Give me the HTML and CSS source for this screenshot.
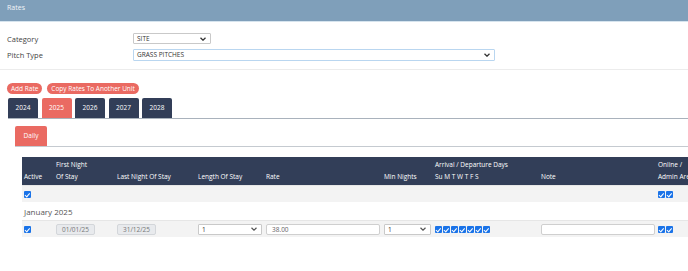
FILE: index.html
```html
<!DOCTYPE html>
<html>
<head>
<meta charset="utf-8">
<link rel="stylesheet" href="styles.css">
</head>
<body>
<div class="titlebar">Rates</div>
<div class="filters">
  <div class="frow">
    <label class="flabel">Category</label>
    <div class="sel sel-cat"><span>SITE</span><svg width="6" height="4" viewBox="0 0 6 4"><path d="M0.5 0.8 L3 3.2 L5.5 0.8" fill="none" stroke="#333" stroke-width="1.3"/></svg></div>
  </div>
  <div class="frow">
    <label class="flabel">Pitch Type</label>
    <div class="sel sel-pitch"><span>GRASS PITCHES</span><svg width="6" height="4" viewBox="0 0 6 4"><path d="M0.5 0.8 L3 3.2 L5.5 0.8" fill="none" stroke="#333" stroke-width="1.3"/></svg></div>
  </div>
</div>
<div class="actions">
  <button class="pill">Add Rate</button>
  <button class="pill">Copy Rates To Another Unit</button>
</div>
<div class="years">
  <div class="ytab">2024</div>
  <div class="ytab active">2025</div>
  <div class="ytab">2026</div>
  <div class="ytab">2027</div>
  <div class="ytab">2028</div>
</div>
<div class="subtabs">
  <div class="stab">Daily</div>
</div>
<div class="tablewrap">
<table class="rates">
  <colgroup>
    <col style="width:32px"><col style="width:61px"><col style="width:81px"><col style="width:68px"><col style="width:118px"><col style="width:51px"><col style="width:106px"><col style="width:117px"><col style="width:60px">
  </colgroup>
  <thead>
    <tr>
      <th><br>Active</th>
      <th>First Night<br>Of Stay</th>
      <th><br>Last Night Of Stay</th>
      <th><br>Length Of Stay</th>
      <th><br>Rate</th>
      <th><br>Min Nights</th>
      <th>Arrival / Departure Days<br>Su M T W T F S</th>
      <th><br>Note</th>
      <th class="nowrap">Online /<br>Admin Area</th>
    </tr>
  </thead>
  <tbody>
    <tr class="grey">
      <td><span class="cb"></span></td>
      <td></td><td></td><td></td><td></td><td></td><td></td><td></td>
      <td><span class="cb"></span><span class="cb"></span></td>
    </tr>
    <tr class="month">
      <td colspan="9">January 2025</td>
    </tr>
    <tr class="grey">
      <td><span class="cb"></span></td>
      <td><div class="date">01/01/25</div></td>
      <td><div class="date">31/12/25</div></td>
      <td><div class="sel sel-len"><span>1</span><svg width="6" height="4" viewBox="0 0 6 4"><path d="M0.5 0.8 L3 3.2 L5.5 0.8" fill="none" stroke="#555" stroke-width="1.2"/></svg></div></td>
      <td><div class="inp inp-rate">38.00</div></td>
      <td><div class="sel sel-min"><span>1</span><svg width="6" height="4" viewBox="0 0 6 4"><path d="M0.5 0.8 L3 3.2 L5.5 0.8" fill="none" stroke="#555" stroke-width="1.2"/></svg></div></td>
      <td><span class="cb"></span><span class="cb"></span><span class="cb"></span><span class="cb"></span><span class="cb"></span><span class="cb"></span><span class="cb"></span></td>
      <td><div class="inp inp-note"></div></td>
      <td><span class="cb"></span><span class="cb"></span></td>
    </tr>
  </tbody>
</table>
</div>
</body>
</html>
```
FILE: styles.css
```css
html, body {
  margin: 0;
  padding: 0;
  background: #fff;
  overflow: hidden;
  width: 688px;
  height: 271px;
}
body {
  font-family: "Open Sans", "Liberation Sans", sans-serif;
  font-size: 7px;
  color: #444;
}
.titlebar {
  height: 21px;
  background: #7f9fba;
  border-bottom: 1px solid #d6e4ee;
  color: #f2f5f8;
  font-size: 7px;
  line-height: 15px;
  padding-left: 7px;
  box-sizing: content-box;
}
.filters {
  padding-top: 11px;
  padding-bottom: 9px;
  border-bottom: 1px solid #ececec;
}
.frow {
  display: flex;
  align-items: center;
  height: 11px;
  margin-bottom: 5px;
}
.frow:last-child { margin-bottom: 0; }
.flabel {
  width: 126px;
  padding-left: 7px;
  font-size: 7.5px;
  color: #444;
}
.sel {
  display: flex;
  align-items: center;
  justify-content: space-between;
  box-sizing: border-box;
  border: 1px solid #c9c9c9;
  background: #fff;
  padding: 0 4px 0 3px;
  font-size: 6.5px;
  color: #333;
  border-radius: 1px;
}
.sel-cat { width: 78px; height: 11px; }
.sel-pitch { width: 362px; height: 12px; border-color: #b9d6f0; }
.actions {
  display: flex;
  gap: 5px;
  padding: 13px 0 0 7px;
  height: 11px;
}
.pill {
  height: 11px;
  border: none;
  border-radius: 6px;
  background: #ea6a62;
  color: #fff;
  font-family: inherit;
  font-size: 6.5px;
  padding: 0 4px;
  line-height: 11px;
}
.years {
  display: flex;
  gap: 3.5px;
  margin: 4px 0 0 8px;
  border-bottom: 1px solid #a9b2bc;
}
.ytab {
  width: 30px;
  height: 20px;
  line-height: 20px;
  text-align: center;
  background: #323e58;
  color: #fff;
  font-size: 6.5px;
  border-radius: 2px 2px 0 0;
}
.ytab.active { background: #ea6a62; }
.subtabs {
  display: flex;
  margin: 7px 0 0 15px;
  border-bottom: 1px solid #c5cad0;
}
.stab {
  width: 32px;
  height: 20px;
  line-height: 20px;
  text-align: center;
  background: #ea6a62;
  color: #fff;
  font-size: 6.5px;
  border-radius: 2px 2px 0 0;
}
.tablewrap {
  margin: 10px 0 0 22px;
  width: 700px;
}
.rates {
  border-collapse: collapse;
  table-layout: fixed;
  width: 694px;
}
.rates th {
  background: #323e58;
  color: #fff;
  font-weight: normal;
  font-size: 6.5px;
  text-align: left;
  vertical-align: top;
  line-height: 12px;
  padding: 2px 2px 2px 2px;
  white-space: nowrap;
}
.rates td {
  padding: 0 2px;
  height: 16px;
  vertical-align: middle;
  white-space: nowrap;
}
.rates tr.grey td {
  background: #f3f3f3;
  border-top: 1px solid #e6e6e6;
}
.rates tr.month td {
  height: 18px;
  font-size: 8px;
  color: #555;
  background: #fff;
}
.cb {
  display: inline-block;
  width: 7px;
  height: 7px;
  background: #1a73e8;
  border-radius: 1px;
  margin-right: 1px;
  vertical-align: middle;
  position: relative;
}
.cb::after {
  content: "";
  position: absolute;
  left: 2.3px;
  top: 0.6px;
  width: 1.6px;
  height: 3.6px;
  border: solid #fff;
  border-width: 0 1px 1px 0;
  transform: rotate(40deg);
}
.date {
  width: 39px;
  height: 11px;
  box-sizing: border-box;
  background: #e8eaed;
  border: 1px solid #d3d6da;
  border-radius: 2px;
  color: #777;
  font-size: 6.5px;
  line-height: 9px;
  text-align: center;
}
.inp {
  height: 11px;
  box-sizing: border-box;
  border: 1px solid #cfcfcf;
  background: #fff;
  border-radius: 2px;
  font-size: 6.5px;
  line-height: 9px;
  padding-left: 5px;
  color: #666;
}
.inp-rate { width: 114px; }
.inp-note { width: 114px; }
.sel-len { width: 64px; height: 11px; }
.sel-min { width: 47px; height: 11px; }
.nowrap { white-space: nowrap; }
```
